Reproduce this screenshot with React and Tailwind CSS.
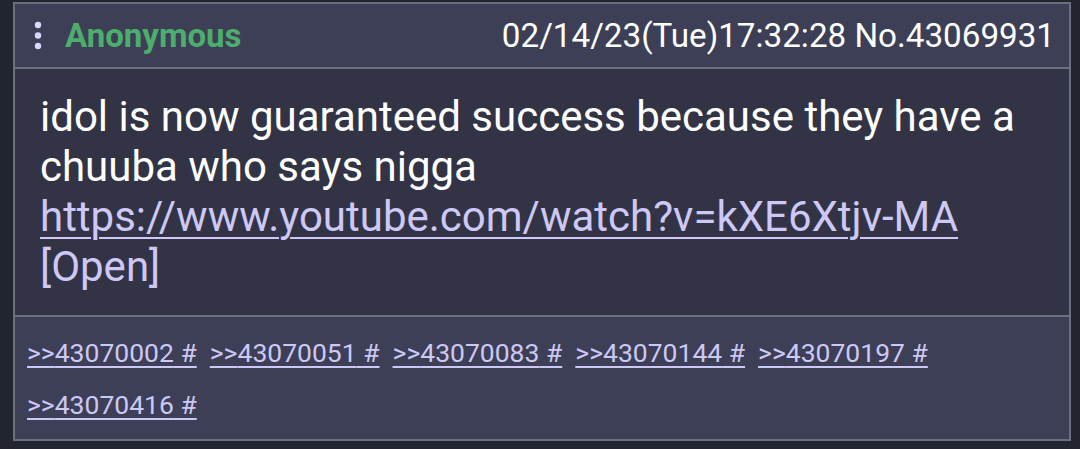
export default function App() {
  const replies = ["43070002", "43070051", "43070083", "43070144", "43070197", "43070416"];
  return (
    <div className="w-[1080px] h-[449px] bg-[#22242e] pl-[13px] pr-[9px] pt-[2px]" style={{ fontFamily: "Roboto, 'Noto Sans', sans-serif" }}>
      <div className="w-[1058px] h-[439px] border-2 border-[#6b7081] flex flex-col">
        <div className="h-[65px] bg-[#3c3f55] flex items-center pl-[19px] pr-[14px] border-b-2 border-[#6b7081] shrink-0">
          <svg width="8" height="30" viewBox="0 0 8 30" className="shrink-0">
            <circle cx="4" cy="4" r="3.2" fill="#dcd6fb" />
            <circle cx="4" cy="14.5" r="3.2" fill="#dcd6fb" />
            <circle cx="4" cy="25" r="3.2" fill="#dcd6fb" />
          </svg>
          <span className="ml-[23px] text-[33px] leading-[38px] font-bold text-[#4cae6c]">Anonymous</span>
          <span className="ml-auto text-[33.2px] leading-[38px] text-white">02/14/23(Tue)17:32:28 No.43069931</span>
        </div>
        <div className="h-[246px] bg-[#323445] pl-[25px] pr-[20px] pt-[23px] text-[42px] leading-[50px] text-white shrink-0">
          <div>idol is now guaranteed success because they have a chuuba who says nigga</div>
          <div className="text-[#cdc8f6] underline decoration-2 underline-offset-[6px]">https://www.youtube.com/watch?v=kXE6Xtjv-MA</div>
          <div className="text-[#cdc8f6]">[Open]</div>
        </div>
        <div className="flex-1 bg-[#3c3f55] border-t-2 border-[#6b7081] pl-[12px] pr-[12px] pt-[10px] flex flex-wrap gap-x-[13px] content-start">
          {replies.map((r) => (
            <span key={r} className="text-[26.5px] leading-[52px] text-[#cdc8f6] underline decoration-2 underline-offset-[4px]">
              &gt;&gt;{r} #
            </span>
          ))}
        </div>
      </div>
    </div>
  );
}
